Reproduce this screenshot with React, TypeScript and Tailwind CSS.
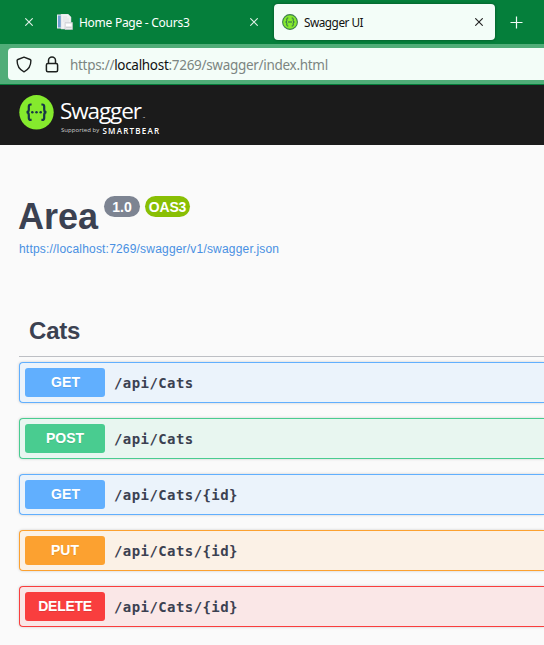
import React from "react";

const ops = [
  { method: "GET", path: "/api/Cats", row: "border-[#61affe] bg-[#ebf3fb]", badge: "bg-[#61affe] pl-px tracking-[0.1px]" },
  { method: "POST", path: "/api/Cats", row: "border-[#49cc90] bg-[#e8f6f0]", badge: "bg-[#49cc90]" },
  { method: "GET", path: "/api/Cats/{id}", row: "border-[#61affe] bg-[#ebf3fb]", badge: "bg-[#61affe] pl-px tracking-[0.1px]" },
  { method: "PUT", path: "/api/Cats/{id}", row: "border-[#fca130] bg-[#fbf1e6]", badge: "bg-[#fca130]" },
  { method: "DELETE", path: "/api/Cats/{id}", row: "border-[#f93e3e] bg-[#fae7e7]", badge: "bg-[#f93e3e] tracking-[-0.3px]" },
];

function Close({ className }: { className: string }) {
  return (
    <svg className={`h-[8px] w-[8px] shrink-0 ${className}`} viewBox="0 0 8 8" fill="none" stroke="currentColor" strokeWidth="1.1">
      <path d="M0.3 0.3 7.7 7.7M7.7 0.3 0.3 7.7" />
    </svg>
  );
}

function PagesIcon() {
  return (
    <svg className="h-4 w-4 shrink-0" viewBox="0 0 16 16">
      <path d="M0 .5h10v14H0z" fill="#e9edf2" />
      <path d="M1 1.5h3v12H1z" fill="#6f9dd2" />
      <path d="M4 0h7l3 3v12H4z" fill="#f1f1f3" stroke="#d3d5d9" strokeWidth=".5" />
      <path d="M6 3h4M6 5h6M6 7h6" stroke="#e0e2e5" />
      <path d="M8 8.5h7.5v7H8z" fill="#e9e9ec" stroke="#c6c8ce" strokeWidth=".6" />
      <path d="M9 10h5.5v2H9z" fill="#fff" />
      <path d="M9 13.5h5.5" stroke="#cfd1d5" />
    </svg>
  );
}

function Favicon() {
  return (
    <svg className="h-4 w-4 shrink-0" viewBox="0 0 16 16" fill="none">
      <circle cx="8" cy="8" r="7.4" fill="#85ea2d" stroke="#3f7f50" strokeWidth="1.1" />
      <path d="M6.3 4H5.6Q4.8 4 4.8 5v1.8Q4.8 8 3.6 8q1.2 0 1.2 1.2V11q0 1 .8 1h.7M9.7 4h.7q.8 0 .8 1v1.8Q11.2 8 12.4 8q-1.2 0-1.2 1.2V11q0 1-.8 1h-.7" stroke="#2c6550" />
      <path d="M6 8h4" stroke="#2c6550" strokeWidth="1" />
    </svg>
  );
}

function SwaggerMark() {
  return (
    <svg className="h-[35px] w-[35px] shrink-0" viewBox="0 0 35 35" fill="none">
      <circle cx="17.5" cy="17.3" r="17.2" fill="#85ea2d" />
      <path d="M12.6 9.5h-.8q-2 0-2 2v3q0 2.7-2.3 2.7 2.3 0 2.3 2.7v3q0 2 2 2h.8M22.4 9.5h.8q2 0 2 2v3q0 2.7 2.3 2.7-2.3 0-2.3 2.7v3q0 2-2 2h-.8" stroke="#173647" strokeWidth="2.2" />
      <g fill="#173647">
        <circle cx="13.3" cy="17.2" r="1.25" />
        <circle cx="17.5" cy="17.2" r="1.25" />
        <circle cx="21.7" cy="17.2" r="1.25" />
      </g>
    </svg>
  );
}

export default function App() {
  return (
    <div className="flex h-[645px] w-[544px] flex-col overflow-hidden bg-[#fafafa] font-['Liberation_Sans',Arial,sans-serif] text-[#3b4151]">
      <div className="flex h-[44px] shrink-0 bg-[#057f3b] pt-[4px] font-['Noto_Sans',sans-serif] text-[12px] text-white">
        <div className="flex h-9 w-[53px] shrink-0 items-center pl-[25px]">
          <Close className="text-[#e2f1e8]" />
        </div>
        <div className="flex h-9 w-[221px] shrink-0 items-center pl-[4px] pr-[16px]">
          <PagesIcon />
          <span className="ml-[6px] flex-1 whitespace-nowrap pt-px tracking-[-0.27px]">Home Page - Cours3</span>
          <Close className="text-[#e2f1e8]" />
        </div>
        <div className="flex h-9 w-[221px] shrink-0 items-center rounded-[4px] bg-[#f3fdf8] pl-[8px] pr-[12px] text-[#111] shadow-[0_0_3px_rgba(0,0,0,0.4)]">
          <Favicon />
          <span className="ml-[6px] flex-1 whitespace-nowrap pt-px text-[11.8px] tracking-[-0.5px]">Swagger UI</span>
          <Close className="text-[#222]" />
        </div>
        <div className="flex h-9 items-center pl-[15px] pt-px">
          <svg className="h-[13px] w-[13px]" viewBox="0 0 13 13" stroke="#f3fdf8" strokeWidth="1.2"><path d="M6.5 .5v12M.5 6.5h12" /></svg>
        </div>
      </div>

      <div className="h-[41px] shrink-0 border-b border-[#057f3b] bg-[#50ad78] pl-[8px] pt-[4px]">
        <div className="flex h-[32px] items-center rounded-l-[4px] bg-[#f3fdf8] pl-[8px] font-['Noto_Sans',sans-serif] text-[13.5px] text-[#7c8581]">
          <svg className="h-[17px] w-[16px] shrink-0" viewBox="0 0 16 17" fill="none" stroke="#1d211f" strokeWidth="1.4" strokeLinejoin="round">
            <path d="M8 1.1 14.1 3.5q.8.3.8 1.1c0 4.7-2 9-6.9 11.3C3.1 13.6 1.1 9.3 1.1 4.6q0-.8.8-1.1z" />
          </svg>
          <svg className="ml-[13px] h-[17px] w-[14px] shrink-0" viewBox="0 0 14 17" fill="none" stroke="#1d211f" strokeWidth="1.5">
            <rect x="1.4" y="7.5" width="11.2" height="8.2" rx="1.5" />
            <path d="M3.5 7.5V4.6a3.5 3.5 0 0 1 7 0v2.9" />
          </svg>
          <span className="ml-[11px] whitespace-nowrap pt-[3px] tracking-[-0.3px]">https://<span className="text-[#111]">localhost</span>:7269/swagger/index.html</span>
        </div>
      </div>

      <header className="flex h-[60px] shrink-0 bg-[#1b1b1b] pl-[19px] pt-[10px] font-['Open_Sans',sans-serif] text-white">
        <SwaggerMark />
        <div className="ml-[6px]">
          <div className="flex h-[30px] items-end whitespace-nowrap">
            <span className="text-[22.5px] leading-[28px] tracking-[-1.1px]">Swagger</span>
            <span className="ml-[2px] pb-[5px] text-[3px] leading-[4px]">™</span>
          </div>
          <div className="flex h-[11px] items-center whitespace-nowrap leading-[11px]">
            <span className="ml-px text-[6px] tracking-[0.05px] text-[#d0d0d0]">Supported by</span>
            <span className="ml-[3px] text-[8px] font-semibold tracking-[1.25px]">SMARTBEAR</span>
          </div>
        </div>
      </header>

      <main className="flex-1 pl-[19px] pt-[51px]">
        <div className="flex h-[42px] items-start">
          <h1 className="w-[80px] pt-px text-[36px] font-bold leading-[40px] -ml-px">Area</h1>
          <span className="ml-[6px] flex h-[21px] w-[36px] items-center justify-center rounded-full bg-[#7d8492] pt-px text-[14px] font-bold text-white">1.0</span>
          <span className="ml-[5px] flex h-[21px] w-[45px] items-center justify-center rounded-full bg-[#89bf04] pt-px text-[14px] font-bold tracking-[-0.2px] text-white">OAS3</span>
        </div>
        <a className="block h-[20px] whitespace-nowrap pt-[3px] text-[12px] leading-[16px] tracking-[0.19px] text-[#4990e2]">https://localhost:7269/swagger/v1/swagger.json</a>
        <h2 className="mt-[53px] h-[46px] border-b border-[#bdbfc4] pl-[10px] pt-[5px] text-[24px] font-bold leading-[30px] tracking-[-0.2px]">Cats</h2>
        <div className="mt-[5px] flex flex-col gap-[15px]">
          {ops.map((op, i) => (
            <div key={i} className={`flex h-[41px] items-center rounded-l-[4px] border border-r-0 p-[5px] shadow-[0_0_3px_rgba(0,0,0,0.19)] ${op.row}`}>
              <span className={`flex h-[29px] w-[80px] shrink-0 items-center justify-center rounded-[3px] text-[14px] font-bold text-white [text-shadow:0_1px_0_rgba(0,0,0,0.1)] ${op.badge}`}>{op.method}</span>
              <span className="ml-[9px] whitespace-nowrap pt-[2px] font-['DejaVu_Sans_Mono',monospace] text-[14px] font-bold tracking-[0.42px]">{op.path}</span>
            </div>
          ))}
        </div>
      </main>
    </div>
  );
}
